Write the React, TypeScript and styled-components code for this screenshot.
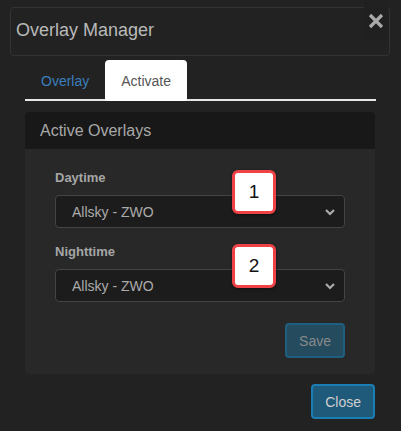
import styled, { createGlobalStyle } from "styled-components";

const GlobalStyle = createGlobalStyle`
  body {
    margin: 0;
    background: #222;
    font-family: "Liberation Sans", Arial, sans-serif;
  }
`;

const Page = styled.div`
  width: 401px;
  height: 431px;
  background: #222;
  padding-top: 7px;
  box-sizing: border-box;
`;

const Header = styled.div`
  position: relative;
  margin: 0 11px 0 10px;
  height: 49px;
  border: 1px solid #333;
  border-radius: 4px;
  box-sizing: border-box;
  display: flex;
  align-items: center;
  padding-left: 5px;
`;

const Title = styled.div`
  font-size: 18px;
  color: #b9b9b9;
  margin-top: -2px;
`;

const CloseX = styled.button`
  position: absolute;
  top: -7px;
  right: 1px;
  width: 24px;
  height: 39px;
  border: 0;
  padding: 0;
  background: #202020;
  display: flex;
  align-items: center;
  justify-content: center;
  cursor: pointer;
`;

const Tabs = styled.div`
  display: flex;
  margin: 4px 25px 0 25px;
  border-bottom: 2px solid #e6e6e6;
  height: 39px;
`;

const Tab = styled.div<{ $active?: boolean }>`
  padding: 0 16px;
  display: flex;
  align-items: center;
  font-size: 14px;
  height: 41px;
  border-radius: 4px 4px 0 0;
  background: ${(p) => (p.$active ? "#fff" : "transparent")};
  color: ${(p) => (p.$active ? "#555" : "#3a7fbd")};
`;

const Panel = styled.div`
  margin: 11px 26px 0 25px;
  background: #282828;
  border-radius: 4px;
  overflow: hidden;
`;

const PanelHeader = styled.div`
  height: 37px;
  background: #181818;
  padding-left: 15px;
  display: flex;
  align-items: center;
  font-size: 16px;
  color: #a8a8a8;
`;

const PanelBody = styled.div`
  padding: 21px 30px 16px 30px;
  display: flex;
  flex-direction: column;
`;

const Group = styled.div`
  position: relative;
  margin-bottom: 16px;
`;

const Label = styled.div`
  font-size: 13px;
  line-height: 15px;
  font-weight: bold;
  color: #a6a6a6;
  margin-bottom: 10px;
`;

const SelectBox = styled.div`
  height: 33px;
  box-sizing: border-box;
  border: 1px solid #444;
  border-radius: 4px;
  background: #1c1c1c;
  display: flex;
  align-items: center;
  justify-content: space-between;
  padding: 0 8px 0 16px;
  font-size: 14px;
  color: #ababab;
`;

const Badge = styled.div`
  position: absolute;
  left: 177px;
  top: 0;
  width: 44px;
  height: 44px;
  box-sizing: border-box;
  border: 3px solid #ee4247;
  border-radius: 6px;
  background: #fff;
  color: #111;
  font-size: 19px;
  display: flex;
  align-items: center;
  justify-content: center;
  box-shadow: 0 1px 3px rgba(0, 0, 0, 0.5);
`;

const Actions = styled.div<{ $outer?: boolean }>`
  display: flex;
  justify-content: flex-end;
  margin: ${(p) => (p.$outer ? "10px 26px 0 0" : "5px 0 0 0")};
`;

const Button = styled.button<{ $disabled?: boolean }>`
  height: 35px;
  padding: 0 12px;
  font-family: "Liberation Sans", Arial, sans-serif;
  font-size: 14px;
  border-radius: 4px;
  border: 2px solid ${(p) => (p.$disabled ? "#1e5f80" : "#1a7db3")};
  background: ${(p) => (p.$disabled ? "#244b5e" : "#1f5a7a")};
  color: ${(p) => (p.$disabled ? "#8a8a8a" : "#cfcfcf")};
`;

const Chevron = () => (
  <svg width="12" height="12" viewBox="0 0 12 12">
    <path d="M2 4 L6 8 L10 4" stroke="#aaa" strokeWidth="2.2" fill="none" />
  </svg>
);

const Select = ({ value }: { value: string }) => (
  <SelectBox>
    <span>{value}</span>
    <Chevron />
  </SelectBox>
);

export default function App() {
  return (
    <Page>
      <GlobalStyle />
      <Header>
        <Title>Overlay Manager</Title>
        <CloseX aria-label="close">
          <svg width="16" height="16" viewBox="0 0 16 16">
            <path d="M2 2 L14 14 M14 2 L2 14" stroke="#a9a9a9" strokeWidth="3.2" />
          </svg>
        </CloseX>
      </Header>
      <Tabs>
        <Tab>Overlay</Tab>
        <Tab $active>Activate</Tab>
      </Tabs>
      <Panel>
        <PanelHeader>Active Overlays</PanelHeader>
        <PanelBody>
          <Group>
            <Label>Daytime</Label>
            <Select value="Allsky - ZWO" />
            <Badge>1</Badge>
          </Group>
          <Group>
            <Label>Nighttime</Label>
            <Select value="Allsky - ZWO" />
            <Badge>2</Badge>
          </Group>
          <Actions>
            <Button $disabled>Save</Button>
          </Actions>
        </PanelBody>
      </Panel>
      <Actions $outer>
        <Button>Close</Button>
      </Actions>
    </Page>
  );
}
